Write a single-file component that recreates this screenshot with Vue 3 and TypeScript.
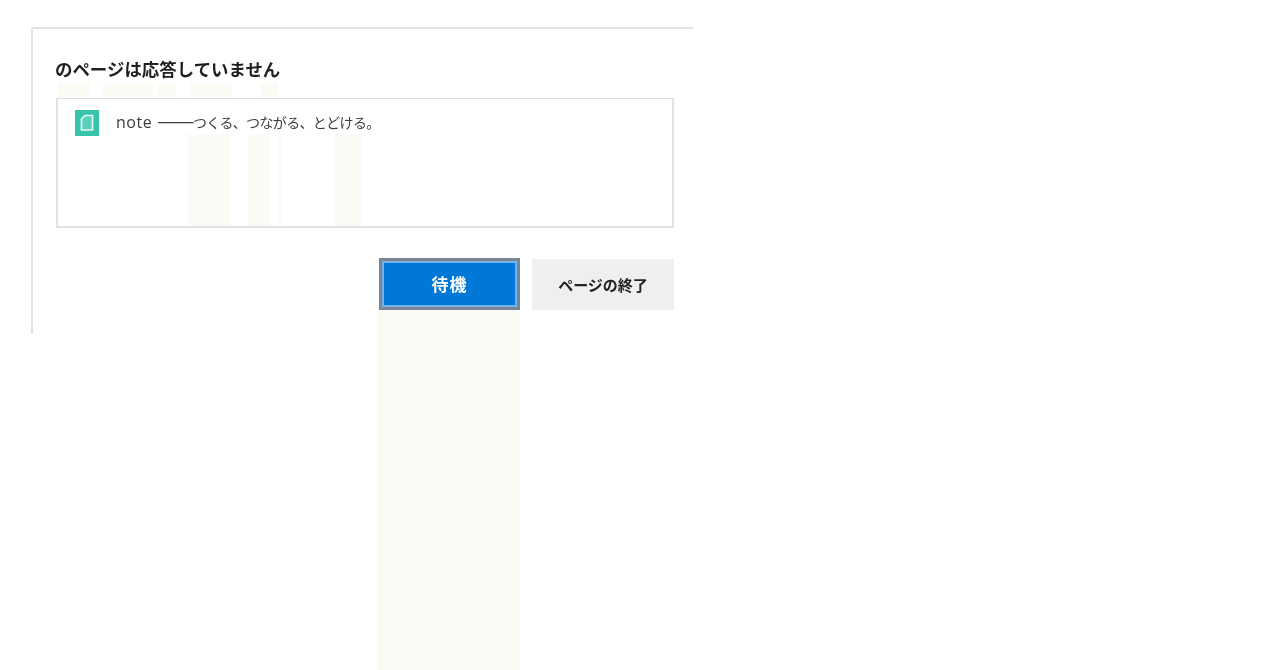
<script setup lang="ts">
interface Stripe { x: number; y: number; w: number; h: number }
const stripes: Stripe[] = [
  { x: 377, y: 310, w: 143, h: 360 },
  { x: 188, y: 134, w: 42, h: 92 },
  { x: 248, y: 134, w: 22, h: 92 },
  { x: 278, y: 134, w: 4, h: 92 },
  { x: 335, y: 134, w: 27, h: 92 },
  { x: 58, y: 83, w: 32, h: 15 },
  { x: 103, y: 83, w: 50, h: 15 },
  { x: 158, y: 83, w: 18, h: 15 },
  { x: 190, y: 83, w: 42, h: 15 },
  { x: 261, y: 83, w: 17, h: 15 },
]
const stripeStyle = (s: Stripe) => ({
  left: `${s.x}px`,
  top: `${s.y}px`,
  width: `${s.w}px`,
  height: `${s.h}px`,
})
</script>

<template>
  <main class="page">
    <section class="dialog">
      <h1 class="title">のページは応答していません</h1>
      <div class="list">
        <svg class="icon" viewBox="0 0 24 26" aria-hidden="true">
          <rect width="24" height="26" fill="#36c5ab" />
          <path d="M10 5.5 H17.5 V20 H6.5 V9 Z" fill="#5ad0bb" stroke="#e4f8f3" stroke-width="1.7" stroke-linejoin="round" />
        </svg>
        <span class="label"><span class="latin">note</span><span class="dash">——</span><span class="jp">つくる、つながる、とどける。</span></span>
      </div>
      <div class="actions">
        <button class="btn primary" type="button">待機</button>
        <button class="btn secondary" type="button">ページの終了</button>
      </div>
    </section>
    <i v-for="(s, i) in stripes" :key="i" class="stripe" :style="stripeStyle(s)"></i>
  </main>
</template>

<style scoped>
.page {
  position: relative;
  width: 1280px;
  height: 670px;
  overflow: hidden;
  background: #fff;
  padding: 27px 0 0 31px;
  box-sizing: border-box;
  font-family: "Noto Sans CJK JP", "Open Sans", sans-serif;
}
.dialog {
  width: 662px;
  height: 307px;
  box-sizing: border-box;
  border-top: 2px solid #e3e3e3;
  border-left: 2px solid #e4e4e4;
  border-top-left-radius: 3px;
  padding: 27px 19px 0 22px;
  display: flex;
  flex-direction: column;
}
.title {
  margin: 0;
  height: 42px;
  font-size: 17.45px;
  line-height: 25px;
  font-weight: 700;
  color: #1f1f1f;
  white-space: nowrap;
  filter: blur(0.4px);
}
.list {
  position: relative;
  z-index: 1;
  width: 618px;
  height: 130px;
  margin-left: 1px;
  box-sizing: border-box;
  border: 2px solid #e2e2e2;
  border-top: 1px solid #dedede;
  padding: 11px 0 0 17px;
  display: flex;
  align-items: flex-start;
  gap: 17px;
}
.icon {
  width: 24px;
  height: 26px;
  flex: none;
}
.label {
  display: flex;
  align-items: baseline;
  height: 20px;
  margin-top: 2px;
  font-size: 14px;
  line-height: 20px;
  color: #3d3d3d;
  white-space: nowrap;
  filter: blur(0.4px);
}
.latin {
  width: 41px;
  font-family: "Open Sans", sans-serif;
  font-size: 16px;
  letter-spacing: 0.5px;
}
.dash {
  width: 36px;
  font-size: 18px;
  line-height: 0;
  letter-spacing: 0;
  transform: scaleX(1.25);
  transform-origin: left center;
}
.jp {
  letter-spacing: -0.65px;
}
.actions {
  position: relative;
  z-index: 1;
  display: flex;
  justify-content: flex-end;
  align-items: flex-start;
  gap: 12px;
  margin-top: 30px;
}
.btn {
  padding: 0 0 1px;
  height: 52px;
  font-family: inherit;
  font-weight: 700;
  filter: blur(0.35px);
}
.primary {
  width: 141px;
  font-size: 17px;
  letter-spacing: 1px;
  color: #fff;
  background: #0078d7;
  border: 3px solid #7a8694;
  box-shadow: inset 0 0 0 2px #74b3ea;
}
.secondary {
  width: 142px;
  height: 51px;
  margin-top: 1px;
  border: 0;
  font-size: 15px;
  color: #222;
  background: #efefef;
}
.stripe {
  position: absolute;
  display: block;
  background: #fbfaf5;
}
</style>
